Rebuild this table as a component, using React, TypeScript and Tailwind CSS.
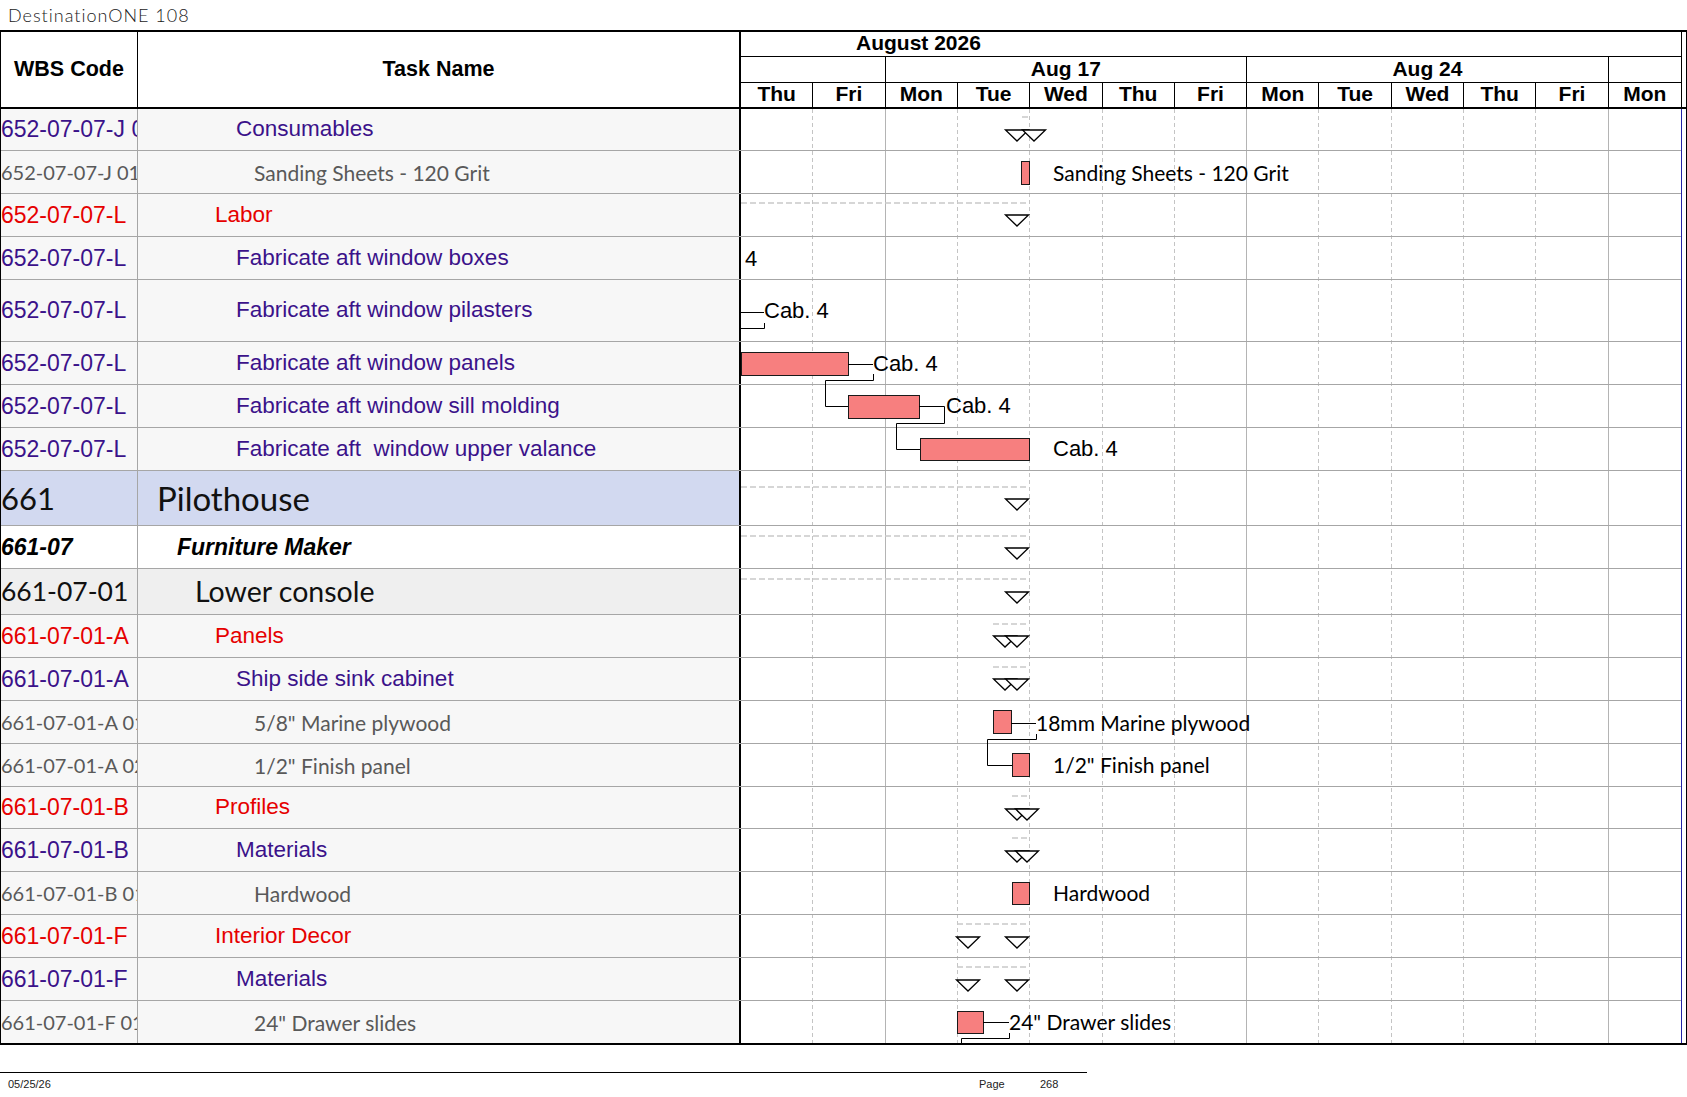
import type { ReactNode } from 'react';

type Kind = 'purple' | 'red' | 'gray' | 'pilot' | 'furn' | 'console';

const LATO = "font-['Lato',sans-serif]";

const kinds: Record<Kind, { row: string; code: string; name: string }> = {
  purple: { row: 'bg-[#f7f7f7]', code: 'text-[23px] text-[#3b128a]', name: 'text-[22.5px] text-[#3b128a]' },
  red: { row: 'bg-[#f7f7f7]', code: 'text-[23px] text-[#e60000]', name: 'text-[22.5px] text-[#e60000]' },
  gray: { row: 'bg-[#f7f7f7]', code: `${LATO} text-[20px] text-[#595959]`, name: `${LATO} text-[21px] text-[#595959]` },
  pilot: { row: 'bg-[#d2d9f0]', code: `${LATO} text-[31px] text-[#111]`, name: `${LATO} text-[33px] text-[#111]` },
  furn: { row: 'bg-white', code: 'text-[23px] font-bold italic text-black', name: 'text-[23px] font-bold italic text-black' },
  console: { row: 'bg-[#efefef]', code: `${LATO} text-[26.5px] text-[#111]`, name: `${LATO} text-[28.5px] text-[#111]` },
};

const heightCls: Record<number, string> = {
  42: 'h-[42px]',
  43: 'h-[43px]',
  46: 'h-[46px]',
  55: 'h-[55px]',
  62: 'h-[62px]',
};

type Row = { code: string; name: string; kind: Kind; pad: string; h: number };

const rows: Row[] = [
  { code: '652-07-07-J 01', name: 'Consumables', kind: 'purple', pad: 'pl-[98px]', h: 42 },
  { code: '652-07-07-J 01 01', name: 'Sanding Sheets - 120 Grit', kind: 'gray', pad: 'pl-[116px]', h: 43 },
  { code: '652-07-07-L', name: 'Labor', kind: 'red', pad: 'pl-[77px]', h: 43 },
  { code: '652-07-07-L', name: 'Fabricate aft window boxes', kind: 'purple', pad: 'pl-[98px]', h: 43 },
  { code: '652-07-07-L', name: 'Fabricate aft window pilasters', kind: 'purple', pad: 'pl-[98px]', h: 62 },
  { code: '652-07-07-L', name: 'Fabricate aft window panels', kind: 'purple', pad: 'pl-[98px]', h: 43 },
  { code: '652-07-07-L', name: 'Fabricate aft window sill molding', kind: 'purple', pad: 'pl-[98px]', h: 43 },
  { code: '652-07-07-L', name: 'Fabricate aft  window upper valance', kind: 'purple', pad: 'pl-[98px]', h: 43 },
  { code: '661', name: 'Pilothouse', kind: 'pilot', pad: 'pl-[19px]', h: 55 },
  { code: '661-07', name: 'Furniture Maker', kind: 'furn', pad: 'pl-[39px]', h: 43 },
  { code: '661-07-01', name: 'Lower console', kind: 'console', pad: 'pl-[57px]', h: 46 },
  { code: '661-07-01-A', name: 'Panels', kind: 'red', pad: 'pl-[77px]', h: 43 },
  { code: '661-07-01-A', name: 'Ship side sink cabinet', kind: 'purple', pad: 'pl-[98px]', h: 43 },
  { code: '661-07-01-A 01', name: '5/8" Marine plywood', kind: 'gray', pad: 'pl-[116px]', h: 43 },
  { code: '661-07-01-A 02', name: '1/2" Finish panel', kind: 'gray', pad: 'pl-[116px]', h: 43 },
  { code: '661-07-01-B', name: 'Profiles', kind: 'red', pad: 'pl-[77px]', h: 42 },
  { code: '661-07-01-B', name: 'Materials', kind: 'purple', pad: 'pl-[98px]', h: 43 },
  { code: '661-07-01-B 01', name: 'Hardwood', kind: 'gray', pad: 'pl-[116px]', h: 43 },
  { code: '661-07-01-F', name: 'Interior Decor', kind: 'red', pad: 'pl-[77px]', h: 43 },
  { code: '661-07-01-F', name: 'Materials', kind: 'purple', pad: 'pl-[98px]', h: 43 },
  { code: '661-07-01-F 01', name: '24" Drawer slides', kind: 'gray', pad: 'pl-[116px]', h: 42 },
];

const tops = rows.reduce<number[]>((acc, r) => [...acc, acc[acc.length - 1] + r.h], [0]);
const BODY_H = tops[tops.length - 1];
const CHART_W = 940;
const COL = CHART_W / 13;
const days = ['Thu', 'Fri', 'Mon', 'Tue', 'Wed', 'Thu', 'Fri', 'Mon', 'Tue', 'Wed', 'Thu', 'Fri', 'Mon'];

const ARIAL_SVG = "font-['Liberation_Sans',Arial,sans-serif] text-[22px]";
const LATO_SVG = "font-['Lato',sans-serif] text-[21px]";

function Tri({ cx, y }: { cx: number; y: number }) {
  return (
    <polygon
      points={`${cx - 11.5},${y} ${cx + 11.5},${y} ${cx},${y + 11}`}
      fill="white"
      stroke="black"
      strokeWidth={1.3}
    />
  );
}

function Bar({ x1, x2, y1, y2 }: { x1: number; x2: number; y1: number; y2: number }) {
  return <rect x={x1 + 0.5} y={y1 + 0.5} width={x2 - x1} height={y2 - y1} fill="#f77f7f" stroke="#1a1a1a" />;
}

function Summary({ x1, x2, y }: { x1: number; x2: number; y: number }) {
  return <line x1={x1} x2={x2} y1={y} y2={y} stroke="#c9c9c9" strokeWidth={1.5} strokeDasharray="6 3" />;
}

function Link({ pts }: { pts: string }) {
  return <polyline points={pts} fill="none" stroke="black" strokeWidth={1} />;
}

function Label({ x, y, lato, children }: { x: number; y: number; lato?: boolean; children: ReactNode }) {
  return (
    <text x={x} y={y} dominantBaseline="central" fill="#000" className={lato ? LATO_SVG : ARIAL_SVG}>
      {children}
    </text>
  );
}

function At({ i, children }: { i: number; children: ReactNode }) {
  return <g transform={`translate(0 ${tops[i]})`}>{children}</g>;
}

function ChartBody() {
  return (
    <svg width={CHART_W} height={BODY_H} className="block">
      {Array.from({ length: 12 }, (_, n) => n + 1).map((k) => {
        const x = Math.round(k * COL) - 0.5;
        const solid = k === 2 || k === 7 || k === 12;
        return (
          <line
            key={k}
            x1={x}
            x2={x}
            y1={0}
            y2={BODY_H}
            stroke={solid ? '#b4b4b4' : '#c4c4c4'}
            strokeDasharray={solid ? undefined : '4 3'}
          />
        );
      })}
      {tops.slice(1, -1).map((t) => (
        <line key={t} x1={0} x2={CHART_W} y1={t - 0.5} y2={t - 0.5} stroke="#a6a6a6" />
      ))}

      <At i={0}>
        <Summary x1={281} x2={288} y={8} />
        <Tri cx={276} y={21} />
        <Tri cx={293} y={21} />
      </At>
      <At i={1}>
        <Bar x1={280} x2={288} y1={10} y2={33} />
        <Label x={312} y={21} lato>
          Sanding Sheets - 120 Grit
        </Label>
      </At>
      <At i={2}>
        <Summary x1={0} x2={288} y={9} />
        <Tri cx={276} y={21} />
      </At>
      <At i={3}>
        <Label x={4} y={21}>4</Label>
      </At>
      <At i={4}>
        <Link pts="0,32.5 23,32.5" />
        <Label x={23} y={30}>Cab. 4</Label>
        <Link pts="0,48.5 23.5,48.5 23.5,43" />
      </At>
      <At i={5}>
        <Bar x1={0} x2={107} y1={10} y2={33} />
        <Link pts="107,22.5 132,22.5" />
        <Label x={132} y={21}>Cab. 4</Label>
        <Link pts="132.5,32 132.5,38.5 84.5,38.5 84.5,64.5 107,64.5" />
      </At>
      <At i={6}>
        <Bar x1={107} x2={178} y1={10} y2={33} />
        <Link pts="178,21.5 203.5,21.5 203.5,38.5 155.5,38.5 155.5,64.5 179,64.5" />
        <Label x={205} y={20.5}>Cab. 4</Label>
      </At>
      <At i={7}>
        <Bar x1={179} x2={288} y1={10} y2={32} />
        <Label x={312} y={20.5}>Cab. 4</Label>
      </At>
      <At i={8}>
        <Summary x1={0} x2={288} y={16} />
        <Tri cx={276} y={28} />
      </At>
      <At i={9}>
        <Summary x1={0} x2={288} y={10} />
        <Tri cx={276} y={22} />
      </At>
      <At i={10}>
        <Summary x1={0} x2={288} y={10} />
        <Tri cx={276} y={23} />
      </At>
      {[11, 12].map((i) => (
        <At key={i} i={i}>
          <Summary x1={252} x2={288} y={9} />
          <Tri cx={264} y={21} />
          <Tri cx={276} y={21} />
        </At>
      ))}
      <At i={13}>
        <Bar x1={252} x2={270} y1={9} y2={32} />
        <Link pts="270,22.5 295,22.5" />
        <Label x={295} y={21} lato>
          18mm Marine plywood
        </Label>
        <Link pts="295.5,33 295.5,38.5 246.5,38.5 246.5,64.5 271,64.5" />
      </At>
      <At i={14}>
        <Bar x1={271} x2={288} y1={9} y2={32} />
        <Label x={312} y={20.5} lato>
          1/2" Finish panel
        </Label>
      </At>
      {[15, 16].map((i) => (
        <At key={i} i={i}>
          <Summary x1={271} x2={288} y={9} />
          <Tri cx={276} y={22} />
          <Tri cx={286} y={22} />
        </At>
      ))}
      <At i={17}>
        <Bar x1={271} x2={288} y1={10} y2={32} />
        <Label x={312} y={20.5} lato>
          Hardwood
        </Label>
      </At>
      {[18, 19].map((i) => (
        <At key={i} i={i}>
          <Summary x1={216} x2={288} y={9} />
          <Tri cx={227} y={22} />
          <Tri cx={276} y={22} />
        </At>
      ))}
      <At i={20}>
        <Bar x1={216} x2={242} y1={10} y2={32} />
        <Link pts="242,21.5 268,21.5" />
        <Label x={268} y={20.5} lato>
          24" Drawer slides
        </Label>
        <Link pts="268.5,32 268.5,37.5 220.5,37.5 220.5,43" />
      </At>
    </svg>
  );
}

export default function App() {
  return (
    <div className="w-[1687px] h-[1097px] bg-white overflow-hidden font-['Liberation_Sans',Arial,sans-serif] text-black">
      <div className={`h-[30px] flex items-center pl-[8px] ${LATO} font-light text-[18px] tracking-[1px] text-[#1a1a1a]`}>
        DestinationONE 108
      </div>

      <div className="w-[1687px] border-t-2 border-b-2 border-l border-r border-black">
        {/* header */}
        <div className="flex h-[77px] border-b-2 border-black">
          <div className="w-[137px] shrink-0 border-r border-black flex items-center justify-center text-[21.5px] font-bold leading-none">
            WBS Code
          </div>
          <div className="w-[603px] shrink-0 border-r-2 border-black flex items-center justify-center text-[21.5px] font-bold leading-none">
            Task Name
          </div>
          <div className="w-[941px] shrink-0 border-r border-black flex flex-col text-[21px] font-bold leading-none">
            <div className="h-[25px] border-b border-black flex items-center pl-[115px] pb-[3px]">August 2026</div>
            <div className="h-[26px] border-b border-black grid grid-cols-[repeat(13,minmax(0,1fr))]">
              <div className="col-span-2 border-r border-black" />
              <div className="col-span-5 border-r border-black flex items-center justify-center pb-[2px]">Aug 17</div>
              <div className="col-span-5 border-r border-black flex items-center justify-center pb-[2px]">Aug 24</div>
              <div className="col-span-1" />
            </div>
            <div className="flex-1 grid grid-cols-[repeat(13,minmax(0,1fr))]">
              {days.map((d, i) => (
                <div
                  key={i}
                  className={`flex items-center justify-center pb-[3px] ${i < 12 ? 'border-r border-black' : ''}`}
                >
                  {d}
                </div>
              ))}
            </div>
          </div>
        </div>

        {/* body */}
        <div className="flex">
          <div className="w-[740px] shrink-0 flex flex-col">
            {rows.map((r, i) => {
              const k = kinds[r.kind];
              const last = i === rows.length - 1;
              return (
                <div
                  key={i}
                  className={`flex ${heightCls[r.h]} ${k.row} ${last ? '' : 'border-b border-[#a6a6a6]'} leading-none`}
                >
                  <div className={`w-[137px] shrink-0 border-r border-[#a6a6a6] overflow-hidden whitespace-nowrap flex items-center ${k.code}`}>
                    {r.code}
                  </div>
                  <div className={`w-[603px] shrink-0 border-r-2 border-black whitespace-pre flex items-center ${r.pad} ${k.name}`}>
                    {r.name}
                  </div>
                </div>
              );
            })}
          </div>
          <div className="w-[941px] shrink-0 border-r border-[#2424a8]">
            <ChartBody />
          </div>
        </div>
      </div>

      <div className="mt-[27px] w-[1087px] border-t border-black pt-[6px] flex text-[11px] leading-none text-[#222]">
        <span className="w-[979px] pl-[8px]">05/25/26</span>
        <span className="w-[61px]">Page</span>
        <span>268</span>
      </div>
    </div>
  );
}
